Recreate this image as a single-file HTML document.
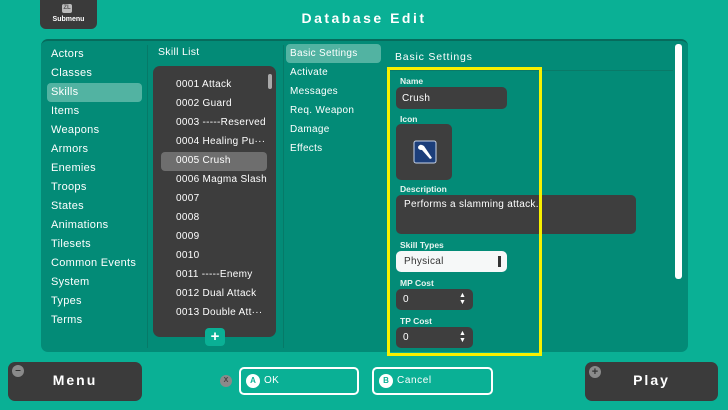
<!DOCTYPE html>
<html><head><style>
*{margin:0;padding:0;box-sizing:border-box}
body{width:728px;height:410px;background:#0ab095;font-family:"Liberation Sans",sans-serif;color:#fff;position:relative;overflow:hidden}
.a{position:absolute}
.t{font-size:10.5px;letter-spacing:.3px;white-space:nowrap}
.lbl{font-size:8.5px;font-weight:bold;color:#e8f4f0}
.dk{background:#3e3e3e;border-radius:5px}
</style></head><body>
<div class="a dk" style="left:40px;top:-6px;width:57px;height:35px;border-radius:6px;background:#3a3a3a"></div>
<div class="a" style="left:62px;top:4px;width:10px;height:9px;background:#bbb;border-radius:2px;font-size:6px;color:#555;text-align:center;line-height:9px;font-weight:bold">ZL</div>
<div class="a" style="left:40px;top:16px;width:57px;text-align:center;font-size:7px;font-weight:bold">Submenu</div>
<div class="a" style="left:0;top:10px;width:728px;text-align:center;font-size:14px;font-weight:bold;letter-spacing:2.5px">Database Edit</div>

<div class="a" style="left:41px;top:39px;width:647px;height:313px;background:#038b77;border-radius:7px;border-top:2px solid #066b5c"></div>
<div class="a" style="left:147px;top:45px;width:1px;height:303px;background:#067a68"></div>
<div class="a" style="left:283px;top:45px;width:1px;height:303px;background:#067a68"></div>

<div class="a" style="left:47px;top:83px;width:95px;height:19px;background:#52b3a2;border-radius:4px"></div>
<div class="a t" style="left:51px;top:45px;line-height:19px;font-size:11px">Actors<br>Classes<br>Skills<br>Items<br>Weapons<br>Armors<br>Enemies<br>Troops<br>States<br>Animations<br>Tilesets<br>Common Events<br>System<br>Types<br>Terms</div>

<div class="a t" style="left:158px;top:46px">Skill List</div>
<div class="a dk" style="left:153px;top:66px;width:123px;height:271px;border-radius:7px;background:#3d3d3d"></div>
<div class="a" style="left:268px;top:74px;width:4px;height:15px;background:#aaa;border-radius:2px"></div>
<div class="a" style="left:161px;top:152px;width:106px;height:19px;background:#6e6e6e;border-radius:4px"></div>
<div class="a t" style="left:176px;top:75px;line-height:19px;font-size:10px">0001 Attack<br>0002 Guard<br>0003 -----Reserved<br>0004 Healing Pu···<br>0005 Crush<br>0006 Magma Slash<br>0007<br>0008<br>0009<br>0010<br>0011 -----Enemy<br>0012 Dual Attack<br>0013 Double Att···</div>
<div class="a" style="left:205px;top:328px;width:20px;height:18px;background:#0ab095;border-radius:4px;text-align:center;font-size:15px;font-weight:bold;line-height:18px">+</div>

<div class="a" style="left:286px;top:44px;width:95px;height:19px;background:#52b3a2;border-radius:4px"></div>
<div class="a t" style="left:290px;top:44px;line-height:19px;font-size:10px">Basic Settings<br>Activate<br>Messages<br>Req. Weapon<br>Damage<br>Effects</div>

<div class="a t" style="left:395px;top:51px;letter-spacing:.8px">Basic Settings</div>
<div class="a" style="left:386px;top:70px;width:287px;height:1px;background:#0a7a68"></div>
<div class="a" style="left:675px;top:44px;width:7px;height:235px;background:#fff;border-radius:3px"></div>

<div class="a lbl" style="left:400px;top:76px">Name</div>
<div class="a dk" style="left:396px;top:87px;width:111px;height:22px"></div>
<div class="a t" style="left:402px;top:93px;font-size:10px">Crush</div>
<div class="a lbl" style="left:400px;top:114px">Icon</div>
<div class="a dk" style="left:396px;top:124px;width:56px;height:56px"></div>
<svg class="a" style="left:413px;top:140px" width="24" height="24"><rect x="1" y="1" width="22" height="22" rx="2" fill="#1c3e7a" stroke="#c8d4e8"/><path d="M5 7 Q7 3 11 6 L19 18 L17 19 L9 10 Q5 10 5 7Z" fill="#fff"/></svg>
<div class="a lbl" style="left:400px;top:184px">Description</div>
<div class="a dk" style="left:396px;top:195px;width:240px;height:39px"></div>
<div class="a t" style="left:404px;top:199px;font-size:10px">Performs a slamming attack.</div>
<div class="a lbl" style="left:400px;top:240px">Skill Types</div>
<div class="a" style="left:396px;top:251px;width:111px;height:21px;background:#f6f8f8;border-radius:5px"></div>
<div class="a t" style="left:404px;top:256px;color:#333;font-size:10px">Physical</div>
<div class="a" style="left:498px;top:256px;width:3px;height:11px;background:#333"></div>
<div class="a lbl" style="left:400px;top:278px">MP Cost</div>
<div class="a dk" style="left:396px;top:289px;width:77px;height:21px"></div>
<div class="a t" style="left:403px;top:294px;font-size:10px">0</div>
<div class="a" style="left:459px;top:292px;font-size:7px;line-height:7px">▲<br>▼</div>
<div class="a lbl" style="left:400px;top:316px">TP Cost</div>
<div class="a dk" style="left:396px;top:327px;width:77px;height:21px"></div>
<div class="a t" style="left:403px;top:332px;font-size:10px">0</div>
<div class="a" style="left:459px;top:330px;font-size:7px;line-height:7px">▲<br>▼</div>
<div class="a" style="left:387px;top:67px;width:155px;height:289px;border:3px solid #f7f000"></div>

<div class="a dk" style="left:8px;top:362px;width:134px;height:39px;border-radius:7px;background:#3b3b3b"></div>
<div class="a" style="left:12px;top:365px;width:12px;height:12px;border-radius:50%;background:#8a8a8a;text-align:center;font-size:10px;line-height:11px;color:#333;font-weight:bold">–</div>
<div class="a" style="left:8px;top:372px;width:134px;text-align:center;font-size:14px;font-weight:bold;letter-spacing:2px">Menu</div>
<div class="a dk" style="left:585px;top:362px;width:133px;height:39px;border-radius:7px;background:#3b3b3b"></div>
<div class="a" style="left:589px;top:366px;width:12px;height:12px;border-radius:50%;background:#8a8a8a;text-align:center;font-size:11px;line-height:12px;color:#333;font-weight:bold">+</div>
<div class="a" style="left:585px;top:372px;width:133px;text-align:center;font-size:14px;font-weight:bold;letter-spacing:2px">Play</div>

<div class="a" style="left:220px;top:375px;width:12px;height:12px;border-radius:50%;background:#8a8a8a;text-align:center;font-size:7px;line-height:12px;color:#444;font-weight:bold">X</div>
<div class="a" style="left:239px;top:367px;width:120px;height:28px;border:2px solid #fff;border-radius:5px"></div>
<div class="a" style="left:246px;top:374px;width:14px;height:14px;border-radius:50%;background:#fff;color:#0ab095;font-size:8px;font-weight:bold;text-align:center;line-height:14px">A</div>
<div class="a t" style="left:264px;top:375px;font-size:10px">OK</div>
<div class="a" style="left:372px;top:367px;width:121px;height:28px;border:2px solid #fff;border-radius:5px"></div>
<div class="a" style="left:379px;top:374px;width:14px;height:14px;border-radius:50%;background:#fff;color:#0ab095;font-size:8px;font-weight:bold;text-align:center;line-height:14px">B</div>
<div class="a t" style="left:397px;top:375px;font-size:10px;letter-spacing:.6px">Cancel</div>
</body></html>
